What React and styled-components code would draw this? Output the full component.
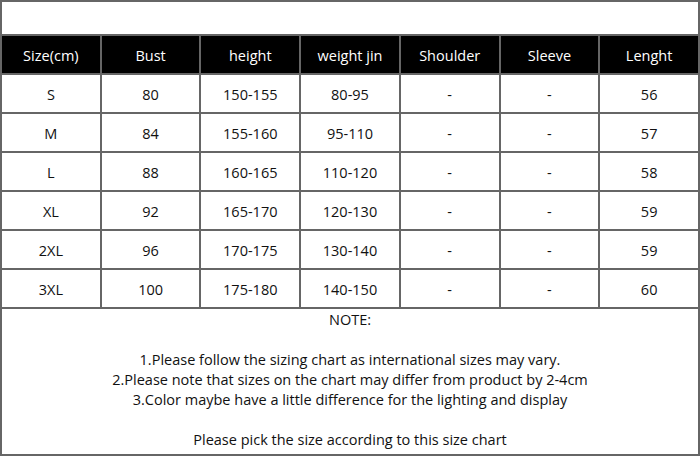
import React from "react";
import styled, { createGlobalStyle } from "styled-components";

const Global = createGlobalStyle`
  html, body { margin: 0; padding: 0; background: #fff; }
  body { font-family: "Open Sans", "Noto Sans", sans-serif; }
`;

const Frame = styled.div`
  width: 700px;
  height: 456px;
  box-sizing: border-box;
  border: 2px solid #666;
  background: #fff;
  display: flex;
  flex-direction: column;
`;

const TopSpace = styled.div`
  height: 32px;
`;

const Table = styled.div`
  display: grid;
  grid-template-columns: repeat(7, 1fr);
  grid-auto-rows: 37px;
  gap: 2px;
  padding: 2px 0;
  background: #666;
`;

const Cell = styled.div`
  display: flex;
  align-items: center;
  justify-content: center;
  padding-top: 2px;
  box-sizing: border-box;
  background: ${(p) => (p.$head ? "#000" : "#fff")};
  color: ${(p) => (p.$head ? "#fff" : "#111")};
  font-size: 14.5px;
`;

const Notes = styled.div`
  padding-top: 1px;
  display: flex;
  flex-direction: column;
  align-items: center;
  font-size: 14.5px;
  color: #111;
`;

const NoteLine = styled.div`
  height: 20px;
  line-height: 20px;
  white-space: pre;
`;

const head = ["Size(cm)", "Bust", "height", "weight jin", "Shoulder", "Sleeve", "Lenght"];
const rows = [
  ["S", "80", "150-155", "80-95", "-", "-", "56"],
  ["M", "84", "155-160", "95-110", "-", "-", "57"],
  ["L", "88", "160-165", "110-120", "-", "-", "58"],
  ["XL", "92", "165-170", "120-130", "-", "-", "59"],
  ["2XL", "96", "170-175", "130-140", "-", "-", "59"],
  ["3XL", "100", "175-180", "140-150", "-", "-", "60"],
];
const notes = [
  "NOTE:",
  " ",
  "1.Please follow the sizing chart as international sizes may vary.",
  "2.Please note that sizes on the chart may differ from product by 2-4cm",
  "3.Color maybe have a little difference for the lighting and display",
  " ",
  "Please pick the size according to this size chart",
];

export default function App() {
  return (
    <>
      <Global />
      <Frame>
        <TopSpace />
        <Table>
          {head.map((h) => (
            <Cell key={h} $head>
              {h}
            </Cell>
          ))}
          {rows.map((r, i) =>
            r.map((c, j) => <Cell key={`${i}-${j}`}>{c}</Cell>)
          )}
        </Table>
        <Notes>
          {notes.map((n, i) => (
            <NoteLine key={i}>{n}</NoteLine>
          ))}
        </Notes>
      </Frame>
    </>
  );
}
